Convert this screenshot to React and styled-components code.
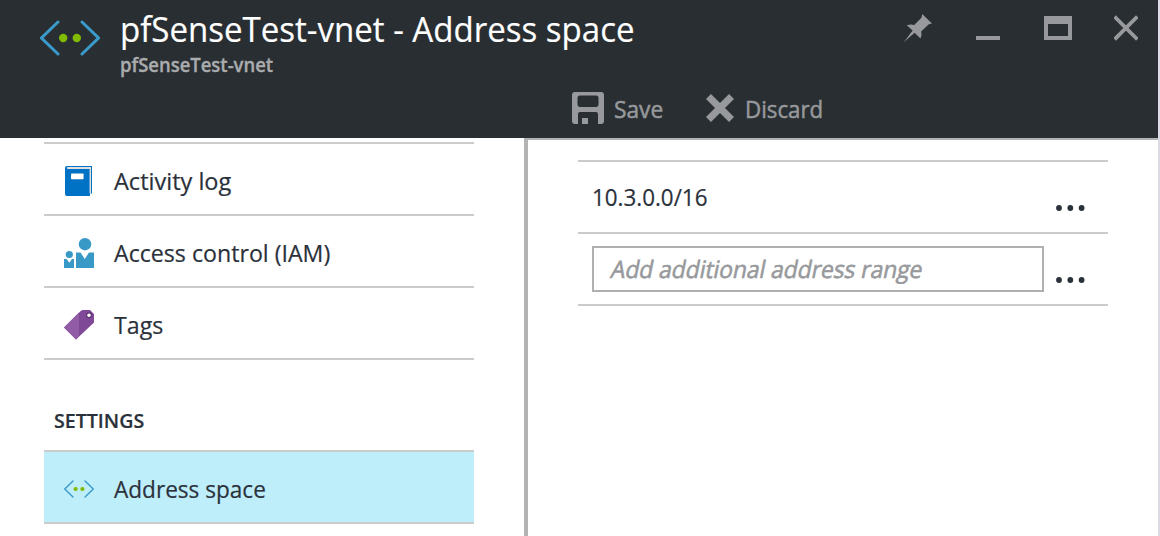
import React from 'react';
import styled, { createGlobalStyle } from 'styled-components';

const GlobalStyle = createGlobalStyle`
  * { box-sizing: border-box; }
  body {
    margin: 0;
    overflow: hidden;
    background: #fff;
    color: #2b313a;
    font-family: "Open Sans", "Noto Sans", sans-serif;
    font-weight: 450;
  }
  svg { display: block; flex: none; }
`;

const Blade = styled.div`
  width: 1160px;
  height: 536px;
  display: flex;
  flex-direction: column;
  overflow: hidden;
  border-right: 2px solid #dcdbe5;
`;

const Header = styled.header`
  height: 138px;
  flex: none;
  background: #292e32;
  display: flex;
  flex-direction: column;
  justify-content: space-between;
`;

const TitleBar = styled.div`
  display: flex;
  align-items: flex-start;
  padding: 9px 20px 0 40px;
`;

const HeaderIcon = styled.div`
  padding-top: 11px;
  width: 80px;
`;

const Titles = styled.div`
  flex: 1;
`;

const Condensed = styled.span`
  display: inline-block;
  white-space: nowrap;
  transform: scaleX(${(p) => p.$fit}) skewX(${(p) => p.$slant || 0}deg);
  transform-origin: left ${(p) => (p.$slant ? '75%' : 'center')};
  -webkit-text-stroke: ${(p) => p.$stroke ?? 0.2}px currentColor;
`;

const Title = styled.h1`
  margin: 0;
  height: 40px;
  font-size: 35px;
  line-height: 40px;
  font-weight: 430;
  color: #fff;
`;

const Subtitle = styled.div`
  height: 24px;
  margin-top: 4px;
  font-size: 20px;
  line-height: 24px;
  font-weight: 650;
  color: #a9abad;
`;

const WindowControls = styled.div`
  display: flex;
  padding-top: 5px;
`;

const WindowButton = styled.button`
  display: flex;
  border: 0;
  padding: 0;
  background: none;
  margin-left: ${(p) => p.$gap}px;
`;

const Toolbar = styled.div`
  display: flex;
  align-items: flex-start;
  height: 46px;
  padding-left: 572px;
`;

const ToolButton = styled.button`
  display: flex;
  align-items: flex-start;
  gap: ${(p) => p.$gap}px;
  width: ${(p) => p.$width}px;
  border: 0;
  padding: 0;
  background: none;
  color: #97999c;
  font: 500 24px/34px "Open Sans", "Noto Sans", sans-serif;
`;

const Body = styled.div`
  flex: 1;
  display: flex;
  min-height: 0;
`;

const Sidebar = styled.nav`
  flex: none;
  width: 524px;
  padding: 4px 50px 0 44px;
`;

const MenuItem = styled.div`
  display: flex;
  align-items: center;
  height: 72px;
  border-top: 2px solid #cbcbcb;
  padding: 3px 0 0 20px;
  gap: 20px;
  font-size: 24px;
  line-height: 32px;
  background: ${(p) => (p.$selected ? '#bfeefb' : 'transparent')};
`;

const MenuGroup = styled.div`
  border-bottom: 2px solid #cbcbcb;
`;

const GroupHeading = styled.h2`
  margin: 0;
  height: 90px;
  padding: 46px 0 0 10px;
  font-size: 20px;
  line-height: 30px;
  font-weight: 600;
`;

const Content = styled.main`
  flex: 1;
  border-left: 4px solid #b3b3b3;
  border-top: 2px solid #b3b3b3;
  padding: 20px 50px 0;
`;

const AddressTable = styled.div`
  border-bottom: 2px solid #cbcbcb;
`;

const AddressRow = styled.div`
  display: flex;
  align-items: center;
  height: 72px;
  border-top: 2px solid #cbcbcb;
  padding: 0 20px 0 14px;
  font-size: 24px;
  line-height: 32px;
`;

const AddressValue = styled.div`
  flex: none;
  width: 452px;
`;

const AddressField = styled.div`
  flex: none;
  width: 452px;
  height: 46px;
  border: 2px solid #b0b0b0;
  padding: 5px 0 0 16px;
  color: #97999c;
  font-weight: 500;
`;

const MoreButton = styled.button`
  display: flex;
  border: 0;
  background: none;
  padding: 21px 0 0;
  margin-left: 12px;
`;

function NetworkIcon({ width, height, stroke }) {
  return (
    <svg width={width} height={height} viewBox="0 0 60 36">
      <path d="M18 2 1.5 18 18 34M42 2 58.5 18 42 34" fill="none" stroke="#3a9bcb" strokeWidth={stroke} strokeLinecap="round" />
      <circle cx="23.2" cy="18" r="4.2" fill="#80ba01" />
      <circle cx="36.8" cy="18" r="4.2" fill="#80ba01" />
    </svg>
  );
}

function PinIcon() {
  return (
    <svg width="28" height="28" viewBox="0 0 28 28" fill="#97999c">
      <path d="M18.2 0 28 9.6 24.8 10.2 17.2 17.5Q18.2 20.8 16.5 24.5L10.6 18.8 0 28 8.6 16.5 2.8 11.3Q6.5 9.7 10.3 10.9L17.6 3.5Z" />
    </svg>
  );
}

function MinimizeIcon() {
  return <svg width="24" height="28"><path d="M0 22h24v4H0z" fill="#97999c" /></svg>;
}

function MaximizeIcon() {
  return <svg width="28" height="28"><path fillRule="evenodd" d="M0 2h28v24H0zM4 10v12h20V10z" fill="#97999c" /></svg>;
}

function CloseIcon() {
  return <svg width="24" height="28"><path d="M2 4 22 24M22 4 2 24" stroke="#97999c" strokeWidth="3.8" strokeLinecap="square" /></svg>;
}

function SaveIcon() {
  return (
    <svg width="32" height="32" fill="#97999c">
      <path fillRule="evenodd" d="M3 0H29Q32 0 32 3V29Q32 32 29 32H26V22Q26 20 24 20H8Q6 20 6 22V32H3Q0 32 0 29V3Q0 0 3 0ZM8 3.5Q5.5 3.5 5.5 6V12Q5.5 15 8 15H24Q26.5 15 26.5 12V6Q26.5 3.5 24 3.5Z" />
      <path d="M10 26h6v6h-6z" />
    </svg>
  );
}

function DiscardIcon() {
  return <svg width="28" height="32"><path d="M2.5 4.5 25.5 27.5M25.5 4.5 2.5 27.5" stroke="#97999c" strokeWidth="7" /></svg>;
}

function LogIcon() {
  return (
    <svg width="30" height="30" viewBox="0 0 30 30">
      <path d="M3 0H28V27.5H26V30H3Q1 30 1 28V2Q1 0 3 0Z" fill="#0072c6" />
      <path d="M3.5 1H27V27.5H25.6V3H3.5Q2 2 3.5 1Z" fill="#e0e0e0" />
      <rect x="7" y="7.5" width="12.6" height="5.8" rx=".8" fill="#fff" />
    </svg>
  );
}

function PeopleIcon() {
  return (
    <svg width="30" height="30" viewBox="0 0 30 30" fill="#3999c6">
      <circle cx="21" cy="6.2" r="6.2" />
      <path d="M12 14.5H16.5L20.8 21 25 14.5H30V30H12Z" />
      <circle cx="5.3" cy="16.5" r="3.6" />
      <path d="M0 21H2.6L5.3 24.8 8 21H10V30H0Z" />
    </svg>
  );
}

function TagIcon() {
  return (
    <svg width="30" height="30" viewBox="0 0 30 30">
      <path d="M17 .7Q18 0 19 0H26L30 4V12.5L12 29.5 0 17.5Z" fill="#804998" />
      <path d="M15 2.6V26.7L12 29.5 0 17.5Z" fill="#925ba6" />
      <circle cx="25" cy="5.2" r="2.4" fill="#fff" stroke="#5d3270" strokeWidth="1.2" />
    </svg>
  );
}

function MoreIcon() {
  return (
    <svg width="30" height="8" fill="#2b313a">
      <circle cx="3" cy="4" r="2.9" /><circle cx="14.3" cy="4" r="2.9" /><circle cx="25.6" cy="4" r="2.9" />
    </svg>
  );
}

const resources = [
  { label: 'Activity log', fit: 0.98, icon: <LogIcon /> },
  { label: 'Access control (IAM)', fit: 0.965, icon: <PeopleIcon /> },
  { label: 'Tags', fit: 0.965, icon: <TagIcon /> },
];

function Item({ label, fit, icon, selected }) {
  return (
    <MenuItem $selected={selected}>
      {icon}
      <Condensed $fit={fit}>{label}</Condensed>
    </MenuItem>
  );
}

export default function App() {
  return (
    <Blade>
      <GlobalStyle />
      <Header>
        <TitleBar>
          <HeaderIcon><NetworkIcon width={60} height={36} stroke={3} /></HeaderIcon>
          <Titles>
            <Title><Condensed $fit={0.944}>pfSenseTest-vnet - Address space</Condensed></Title>
            <Subtitle><Condensed $fit={0.923} $stroke={0.35}>pfSenseTest-vnet</Condensed></Subtitle>
          </Titles>
          <WindowControls>
            <WindowButton aria-label="Pin" $gap={0}><PinIcon /></WindowButton>
            <WindowButton aria-label="Minimize" $gap={44}><MinimizeIcon /></WindowButton>
            <WindowButton aria-label="Maximize" $gap={44}><MaximizeIcon /></WindowButton>
            <WindowButton aria-label="Close" $gap={42}><CloseIcon /></WindowButton>
          </WindowControls>
        </TitleBar>
        <Toolbar>
          <ToolButton $gap={10} $width={134}><SaveIcon /><Condensed $fit={0.947} $stroke={0.5}>Save</Condensed></ToolButton>
          <ToolButton $gap={11} $width={130}><DiscardIcon /><Condensed $fit={0.929} $stroke={0.5}>Discard</Condensed></ToolButton>
        </Toolbar>
      </Header>
      <Body>
        <Sidebar>
          <MenuGroup>{resources.map((r) => <Item key={r.label} {...r} />)}</MenuGroup>
          <GroupHeading><Condensed $fit={0.98}>SETTINGS</Condensed></GroupHeading>
          <MenuGroup>
            <Item label="Address space" fit={0.941} selected icon={<NetworkIcon width={30} height={18} stroke={2.8} />} />
          </MenuGroup>
        </Sidebar>
        <Content>
          <AddressTable>
            <AddressRow>
              <AddressValue><Condensed $fit={0.933}>10.3.0.0/16</Condensed></AddressValue>
              <MoreButton aria-label="More"><MoreIcon /></MoreButton>
            </AddressRow>
            <AddressRow>
              <AddressField><Condensed $fit={0.948} $slant={-12} $stroke={0.6}>Add additional address range</Condensed></AddressField>
              <MoreButton aria-label="More"><MoreIcon /></MoreButton>
            </AddressRow>
          </AddressTable>
        </Content>
      </Body>
    </Blade>
  );
}
